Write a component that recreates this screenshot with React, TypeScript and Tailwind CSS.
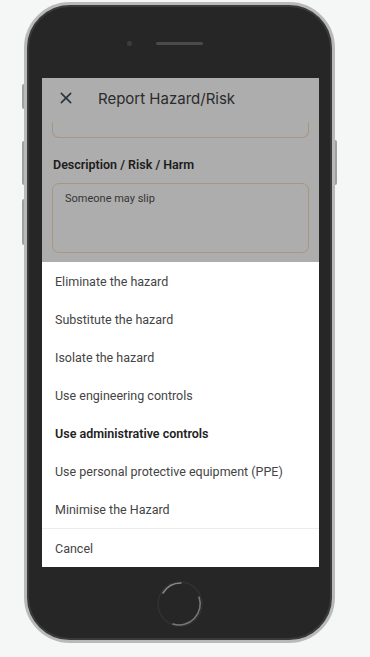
const options = [
  { label: 'Eliminate the hazard' },
  { label: 'Substitute the hazard' },
  { label: 'Isolate the hazard' },
  { label: 'Use engineering controls' },
  { label: 'Use administrative controls', active: true },
  { label: 'Use personal protective equipment (PPE)' },
  { label: 'Minimise the Hazard' },
];

function HomeButton() {
  return (
    <svg viewBox="0 0 50 50" className="h-[50px] w-[50px]" aria-hidden="true">
      <circle cx="25" cy="25" r="22" fill="none" stroke="#313131" strokeWidth="1.5" />
      <path d="M8 14A21 21 0 0 1 26 4" fill="none" stroke="#858585" strokeWidth="1.6" strokeLinecap="round" />
      <path d="M44 18A21 21 0 0 1 18 45" fill="none" stroke="#777" strokeWidth="1.6" strokeLinecap="round" />
    </svg>
  );
}

export default function App() {
  return (
    <div
      className="min-h-[657px] w-[370px] bg-[#f5f7f7] pl-[24px] pt-[2px]"
      style={{ fontFamily: 'Roboto, "Noto Sans", sans-serif' }}
    >
      <div className="relative h-[641px] w-[311px] rounded-[46px] border-[3px] border-[#b9b9b9] bg-[#262626] shadow-[inset_0_0_0_2px_#3a3a3a]">
        {/* side buttons */}
        <span className="absolute left-[-5px] top-[79px] h-[25px] w-[2px] rounded-l bg-[#a0a0a0]" />
        <span className="absolute left-[-5px] top-[136px] h-[44px] w-[2px] rounded-l bg-[#a0a0a0]" />
        <span className="absolute left-[-5px] top-[194px] h-[46px] w-[2px] rounded-l bg-[#a0a0a0]" />
        <span className="absolute right-[-5px] top-[135px] h-[45px] w-[2px] rounded-r bg-[#a0a0a0]" />

        <div className="flex h-[73px] items-center pl-[100px] pt-[4px]">
          <span className="h-[5px] w-[5px] rounded-full bg-[#3c3c3c]" />
          <span className="ml-[24px] h-[3px] w-[47px] rounded-full bg-[#4a4a4a]" />
        </div>

        <div className="ml-[15px] flex h-[489px] w-[277px] flex-col overflow-hidden bg-white">
          <div className="flex h-[184px] flex-col bg-[#adadad]">
            <div className="flex h-[44px] shrink-0 items-center pb-[4px] pl-[16px]">
              <svg viewBox="0 0 24 24" className="h-[16px] w-[16px]" fill="none" stroke="#2a3340" strokeWidth="2.4" strokeLinecap="round">
                <path d="M5 5l14 14M19 5L5 19" />
              </svg>
              <span
                className="ml-[24px] text-[15px] leading-none text-[#2b2b2b]"
                style={{ fontFamily: 'Inter, "Noto Sans", sans-serif' }}
              >
                Report Hazard/Risk
              </span>
            </div>
            <div className="mx-[10px] h-[16px] rounded-b-[7px] border border-t-0 border-[#a9967e]" />
            <div className="mt-[21px] px-[11px] text-[12.5px] font-semibold leading-none text-[#1c1c1c]">
              Description / Risk / Harm
            </div>
            <div className="mx-[10px] mt-[11px] h-[70px] rounded-[7px] border border-[#a9967e] px-[12px] pt-[9px] text-[11px] leading-none text-[#353535]">
              Someone may slip
            </div>
          </div>

          <div className="flex flex-1 flex-col">
            {options.map((o) => (
              <div
                key={o.label}
                className={`flex h-[38px] items-center px-[13px] pt-[2px] text-[12.5px] ${
                  o.active ? 'font-semibold text-[#222]' : 'text-[#444]'
                }`}
              >
                {o.label}
              </div>
            ))}
            <div className="h-px bg-[#ececec]" />
            <div className="flex h-[38px] items-center px-[13px] pt-[2px] text-[12.5px] text-[#444]">Cancel</div>
          </div>
        </div>

        <div className="flex justify-center pl-[1px] pt-[12px]">
          <HomeButton />
        </div>
      </div>
    </div>
  );
}
